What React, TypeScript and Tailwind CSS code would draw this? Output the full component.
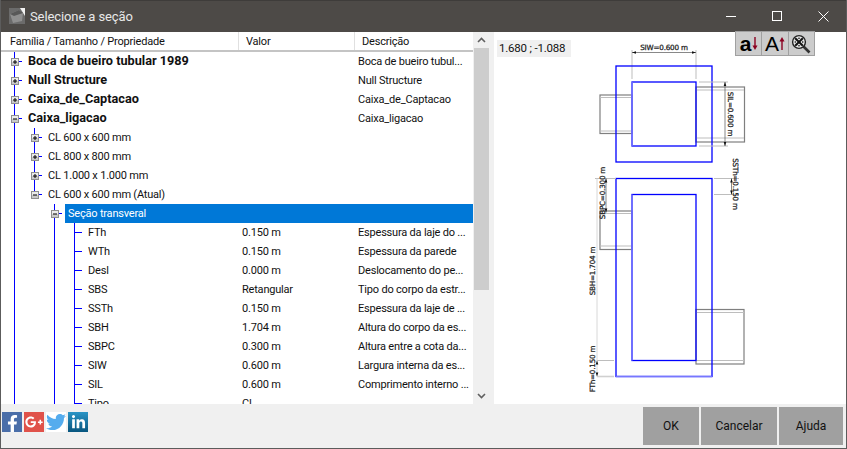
import { FaFacebookF, FaGooglePlusG, FaLinkedinIn, FaTwitter } from "react-icons/fa";

type RowData = {
  name: string;
  value?: string;
  desc?: string;
  level: number;
  kind: "plus" | "minus" | "leaf";
  bold?: boolean;
  selected?: boolean;
  // guias verticais: indice da coluna -> "full" ou "half"
  guides: Record<number, "full" | "half">;
};

const rows: RowData[] = [
  { name: "Boca de bueiro tubular 1989", desc: "Boca de bueiro tubul...", level: 0, kind: "plus", bold: true, guides: { 0: "full" } },
  { name: "Null Structure", desc: "Null Structure", level: 0, kind: "plus", bold: true, guides: { 0: "full" } },
  { name: "Caixa_de_Captacao", desc: "Caixa_de_Captacao", level: 0, kind: "plus", bold: true, guides: { 0: "full" } },
  { name: "Caixa_ligacao", desc: "Caixa_ligacao", level: 0, kind: "minus", bold: true, guides: { 0: "full" } },
  { name: "CL 600 x 600 mm", level: 1, kind: "plus", guides: { 0: "full", 1: "full" } },
  { name: "CL 800 x 800 mm", level: 1, kind: "plus", guides: { 0: "full", 1: "full" } },
  { name: "CL 1.000 x 1.000 mm", level: 1, kind: "plus", guides: { 0: "full", 1: "full" } },
  { name: "CL 600 x 600 mm (Atual)", level: 1, kind: "minus", guides: { 0: "full", 1: "half" } },
  { name: "Seção transveral", level: 2, kind: "minus", selected: true, guides: { 0: "full", 2: "full" } },
  { name: "FTh", value: "0.150 m", desc: "Espessura da laje do ...", level: 3, kind: "leaf", guides: { 0: "full", 2: "full", 3: "full" } },
  { name: "WTh", value: "0.150 m", desc: "Espessura da parede", level: 3, kind: "leaf", guides: { 0: "full", 2: "full", 3: "full" } },
  { name: "Desl", value: "0.000 m", desc: "Deslocamento do pe...", level: 3, kind: "leaf", guides: { 0: "full", 2: "full", 3: "full" } },
  { name: "SBS", value: "Retangular", desc: "Tipo do corpo da estr...", level: 3, kind: "leaf", guides: { 0: "full", 2: "full", 3: "full" } },
  { name: "SSTh", value: "0.150 m", desc: "Espessura da laje de ...", level: 3, kind: "leaf", guides: { 0: "full", 2: "full", 3: "full" } },
  { name: "SBH", value: "1.704 m", desc: "Altura do corpo da es...", level: 3, kind: "leaf", guides: { 0: "full", 2: "full", 3: "full" } },
  { name: "SBPC", value: "0.300 m", desc: "Altura entre a cota da...", level: 3, kind: "leaf", guides: { 0: "full", 2: "full", 3: "full" } },
  { name: "SIW", value: "0.600 m", desc: "Largura interna da es...", level: 3, kind: "leaf", guides: { 0: "full", 2: "full", 3: "full" } },
  { name: "SIL", value: "0.600 m", desc: "Comprimento interno ...", level: 3, kind: "leaf", guides: { 0: "full", 2: "full", 3: "full" } },
  { name: "Tipo", value: "CL", level: 3, kind: "leaf", guides: { 0: "full", 2: "full", 3: "full" } },
];

function ExpandBox({ open }: { open: boolean }) {
  return (
    <svg width="8" height="8" viewBox="0 0 8 8" className="shrink-0">
      <rect x="0.5" y="0.5" width="7" height="7" fill="#c9c9c9" stroke="#8f8f8f" />
      <rect x="1" y="1" width="6" height="3" fill="#ececec" />
      <path d={open ? "M2 4h4" : "M2 4h4M4 2v4"} stroke="#000" strokeWidth="1" />
    </svg>
  );
}

function TreeRow({ row }: { row: RowData }) {
  return (
    <div className="flex h-[19px] shrink-0 items-center">
      <div className="flex h-full w-[238px] shrink-0 items-center pl-[4px]">
        {[0, 1, 2, 3].slice(0, row.level + 1).map((col) => (
          <div key={col} className="relative flex h-full w-5 shrink-0 items-center justify-center">
            {row.guides[col] && (
              <span
                className={`absolute left-[9px] top-0 w-px bg-[#0000ff] ${row.guides[col] === "half" ? "h-[10px]" : "h-full"}`}
              />
            )}
            {col === row.level && (
              <span className="absolute left-[10px] top-[9px] h-px w-[7px] bg-[#0000ff]" />
            )}
            {col === row.level && row.kind !== "leaf" && (
              <span className="relative left-[-0.5px] flex">
                <ExpandBox open={row.kind === "minus"} />
              </span>
            )}
          </div>
        ))}
        {row.selected ? (
          <div className="flex h-full w-[408px] shrink-0 items-center bg-[#0078d7] pl-[3px] text-white">{row.name}</div>
        ) : (
          <span className={`whitespace-nowrap pl-[3px] ${row.bold ? "text-[12.7px] font-bold tracking-normal" : ""}`}>{row.name}</span>
        )}
      </div>
      {!row.selected && (
        <>
          <div className="w-[116px] shrink-0 whitespace-nowrap pl-[3px]">{row.value}</div>
          <div className="w-[118px] shrink-0 whitespace-nowrap pl-[3px]">{row.desc}</div>
        </>
      )}
    </div>
  );
}

function Scrollbar() {
  return (
    <div className="flex w-[21px] shrink-0 flex-col bg-[#f0f0f0]">
      <div className="flex w-[17px] flex-1 flex-col">
        <div className="flex h-4 shrink-0 items-center justify-center">
          <svg width="9" height="6" viewBox="0 0 9 6"><path d="M1 5l3.5-3.5L8 5" fill="none" stroke="#606060" strokeWidth="1.6" /></svg>
        </div>
        <div className="ml-px h-[242px] w-[15px] shrink-0 bg-[#cdcdcd]" />
        <div className="flex-1" />
        <div className="flex h-4 shrink-0 items-center justify-center">
          <svg width="9" height="6" viewBox="0 0 9 6"><path d="M1 1l3.5 3.5L8 1" fill="none" stroke="#606060" strokeWidth="1.6" /></svg>
        </div>
      </div>
    </div>
  );
}

function SectionDrawing() {
  const blue = "#0000ff";
  const gray = "#7f7f7f";
  const light = "#bdbdbd";
  const labelFont = { fontFamily: "'DejaVu Sans', sans-serif", fontSize: 7.2, fill: "#222", stroke: "#222", strokeWidth: 0.25 };
  return (
    <svg width="353" height="372" viewBox="494 32 353 372" className="block">
      {/* planta */}
      <path d="M632 50v29M696 50v29" stroke={light} strokeWidth="1" />
      <path d="M632 52.5h64" stroke="#555" strokeWidth="0.7" />
      <path d="M632 52.5l4-1.3v2.6zM696 52.5l-4-1.3v2.6z" fill="#111" />
      <text x="664" y="50" textAnchor="middle" {...labelFont}>SIW=0.600 m</text>
      <rect x="600" y="95" width="32" height="38.5" fill="none" stroke={gray} strokeWidth="1.2" />
      <path d="M600 97.5h32M600 131h32" stroke={light} />
      <rect x="696" y="87" width="48.5" height="55" fill="none" stroke={gray} strokeWidth="1.2" />
      <path d="M696 90h48M696 138h48" stroke={light} />
      <rect x="616" y="66" width="96" height="96" fill="none" stroke={blue} strokeWidth="1.3" />
      <rect x="632" y="82" width="64" height="64" fill="none" stroke={blue} strokeWidth="1.3" />
      <path d="M632 82v64" stroke="#7777ff" strokeWidth="1.6" />
      <path d="M699 82h29M699 146h29" stroke={light} />
      <path d="M725 82v64" stroke="#555" strokeWidth="0.7" />
      <path d="M725 82l-1.3 4h2.6zM725 146l-1.3-4h2.6z" fill="#111" />
      <text transform="translate(728 114) rotate(90)" textAnchor="middle" {...labelFont}>SIL=0.600 m</text>

      {/* corte */}
      <rect x="600" y="211" width="32" height="38.5" fill="none" stroke={gray} strokeWidth="1.2" />
      <path d="M600 213.5h32M600 246h32" stroke={light} />
      <rect x="696" y="309.5" width="48" height="54.5" fill="none" stroke={gray} strokeWidth="1.2" />
      <path d="M696 312.5h48M696 360.5h48" stroke={light} />
      <rect x="616" y="178.5" width="96" height="198" fill="none" stroke={blue} strokeWidth="1.3" />
      <rect x="632" y="194.5" width="64" height="166" fill="none" stroke={blue} strokeWidth="1.3" />
      <path d="M632 194.5v166M616 376.5h96" stroke="#7777ff" strokeWidth="1.5" />
      <path d="M714 178.5h25M714 194.5h25" stroke={light} />
      <path d="M731.5 178.5v16" stroke="#555" strokeWidth="0.7" />
      <path d="M731.5 178.5l-1.3 4h2.6zM731.5 194.5l-1.3-4h2.6z" fill="#111" />
      <text transform="translate(733 184) rotate(90)" textAnchor="middle" {...labelFont}>SSTh=0.150 m</text>

      <path d="M595 178.5h21M597 360.5h17" stroke={light} />
      <path d="M597 376.5h17" stroke="#d0d0d0" strokeWidth="1.6" />
      <path d="M597 178.5v198" stroke="#d8d8d8" />
      <path d="M606 178.5v34" stroke="#555" strokeWidth="0.7" />
      <path d="M606 178.5l-1.3 4h2.6zM606 212.5l-1.3-4h2.6z" fill="#111" />
      <path d="M597 360.5l-1.3 4h2.6zM597 376.5l-1.3-4h2.6z" fill="#111" />
      <text transform="translate(605 193) rotate(-90)" textAnchor="middle" {...labelFont}>SBPC=0.300 m</text>
      <text transform="translate(595 271) rotate(-90)" textAnchor="middle" {...labelFont}>SBH=1.704 m</text>
      <text transform="translate(595 369) rotate(-90)" textAnchor="middle" {...labelFont}>FTh=0.150 m</text>
    </svg>
  );
}

function DrawingTools() {
  return (
    <div className="absolute right-[32px] top-[-1px] flex h-[25px] w-[80px] gap-px border border-[#a0a0a0] bg-[#a0a0a0]">
      <div className="flex flex-1 items-center justify-center bg-[#cccccc]">
        <span className="font-['Liberation_Sans',sans-serif] text-[21px] font-bold leading-none tracking-normal text-black">a</span>
        <svg width="6" height="15" viewBox="0 0 6 15"><path d="M3 1v11" stroke="#8b0020" strokeWidth="1.4" /><path d="M0.5 9.5h5L3 14z" fill="#8b0020" /></svg>
      </div>
      <div className="flex flex-1 items-center justify-center bg-[#cccccc]">
        <span className="font-['Liberation_Sans',sans-serif] text-[21px] leading-none tracking-normal text-black">A</span>
        <svg width="6" height="15" viewBox="0 0 6 15"><path d="M3 14V3" stroke="#8b0020" strokeWidth="1.4" /><path d="M0.5 5.5h5L3 1z" fill="#8b0020" /></svg>
      </div>
      <div className="flex flex-1 items-center justify-center bg-[#cccccc]">
        <svg width="20" height="20" viewBox="0 0 20 20">
          <path d="M12 12l6.5 6.5" stroke="#333" strokeWidth="2.6" />
          <circle cx="8" cy="8" r="6.4" fill="#eee" stroke="#222" strokeWidth="1.4" />
          <path d="M4.2 4.2l7.6 7.6M11.8 4.2l-7.6 7.6" stroke="#111" strokeWidth="2" />
          <path d="M8 3l1.6 2H6.4zM8 13l1.6-2H6.4zM3 8l2-1.6v3.2zM13 8l-2-1.6v3.2z" fill="#555" />
        </svg>
      </div>
    </div>
  );
}

export default function App() {
  return (
    <div className="flex h-[449px] w-[847px] flex-col overflow-hidden border-x border-b border-[#5c5c5c] font-['Roboto',sans-serif] text-[11px] leading-none tracking-[-0.2px] text-[#111]">
      {/* Barra de titulo */}
      <div className="flex h-[32px] shrink-0 items-center border-t border-[#3e3c3a] bg-[#4d4a47] pb-px">
        <svg width="16" height="16" viewBox="0 0 16 16" className="ml-2 shrink-0">
          <rect width="16" height="16" fill="#6b6b6b" />
          <path d="M11 0h5v8z" fill="#f2f2f2" />
          <path d="M1 6l9-4 4 3-1 8-9 2z" fill="#8f8f8f" />
          <path d="M1 6l9-4 4 3-9 3z" fill="#585858" />
        </svg>
        <span className="ml-[5px] text-[13px] tracking-[-0.1px] text-[#e8e8e8]">Selecione a seção</span>
        <div className="ml-auto flex h-full items-center">
          <div className="flex h-full w-[46px] items-center justify-center">
            <span className="h-px w-[10px] bg-white" />
          </div>
          <div className="flex h-full w-[46px] items-center justify-center">
            <span className="h-[10px] w-[10px] border border-white" />
          </div>
          <div className="flex h-full w-[46px] items-center justify-center">
            <svg width="11" height="11" viewBox="0 0 11 11"><path d="M.5.5l10 10M10.5.5l-10 10" stroke="#fff" /></svg>
          </div>
        </div>
      </div>

      {/* Conteudo */}
      <div className="flex h-[372px] shrink-0">
        <div className="flex w-[472px] shrink-0 flex-col overflow-hidden bg-white">
          <div className="flex h-5 shrink-0 items-center border-b-2 border-[#c4c4c4]">
            <div className="flex h-full w-[238px] items-center border-r border-[#e0e0e0] pl-[9px]">Família / Tamanho / Propriedade</div>
            <div className="flex h-full w-[116px] items-center border-r border-[#e0e0e0] pl-[7px]">Valor</div>
            <div className="flex h-full w-[118px] items-center pl-[7px]">Descrição</div>
          </div>
          {rows.map((row) => (
            <TreeRow key={row.name + row.level} row={row} />
          ))}
        </div>
        <Scrollbar />
        <div className="relative flex-1 bg-white">
          <SectionDrawing />
          <div className="absolute left-[3px] top-[8px] flex h-[17px] w-[74px] items-center bg-[#f0f0f0] pl-[2px] text-[11.5px]">1.680 ; -1.088</div>
          <DrawingTools />
        </div>
      </div>

      {/* Rodape */}
      <div className="flex min-h-0 flex-1 items-start justify-between bg-[#f0f0f0]">
        <div className="flex items-center gap-[2px] pl-px pt-2">
          <div className="flex h-5 w-5 items-end justify-center bg-[#4a6ea9] text-white"><FaFacebookF size={17} /></div>
          <div className="flex h-5 w-5 items-center justify-center bg-[#e0524a] text-white"><FaGooglePlusG size={18} /></div>
          <div className="flex h-5 w-5 items-center justify-center bg-white text-[#55acee]"><FaTwitter size={20} /></div>
          <div className="flex h-5 w-5 items-center justify-center bg-gradient-to-b from-[#2b95c6] to-[#08567f] text-white"><FaLinkedinIn size={15} /></div>
        </div>
        <div className="flex gap-[2px] pr-[3px] pt-[3px] text-[12px] tracking-normal">
          <button className="h-[38px] w-[56px] bg-[#a0a0a0]">OK</button>
          <button className="h-[38px] w-[76px] bg-[#a0a0a0]">Cancelar</button>
          <button className="h-[38px] w-[64px] bg-[#a0a0a0]">Ajuda</button>
        </div>
      </div>
    </div>
  );
}
